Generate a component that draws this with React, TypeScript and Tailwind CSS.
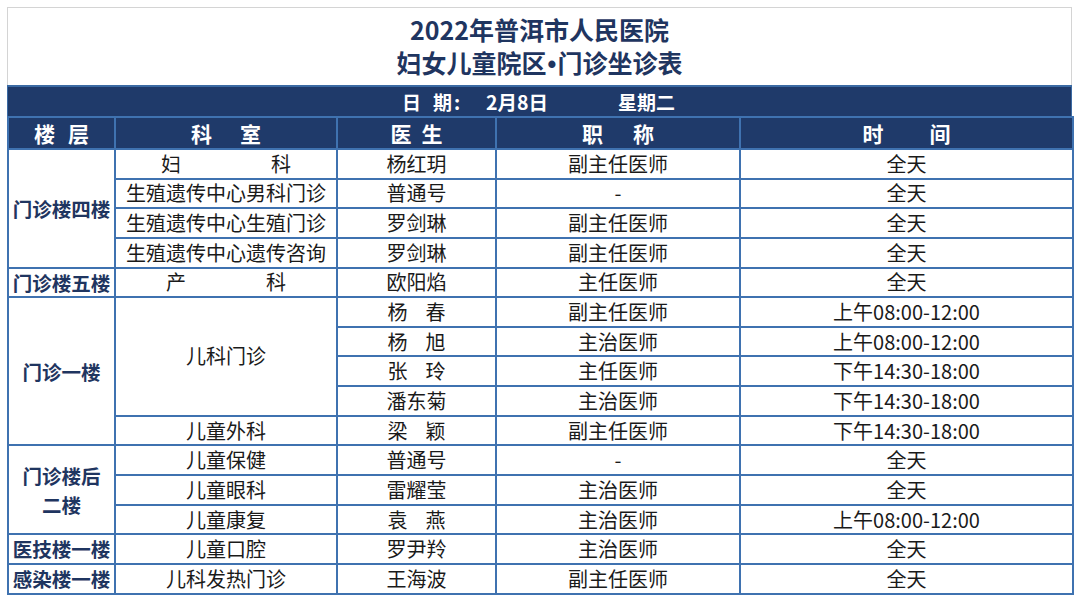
import React from "react";

const FONT = { fontFamily: '"Noto Sans CJK SC", "Noto Sans", sans-serif' };

type Row = {
  floor?: { text: React.ReactNode; span: number };
  dept?: { text: React.ReactNode; span: number };
  doctor: React.ReactNode;
  title: string;
  time: string;
};

const Spread = ({ a, b, w }: { a: string; b: string; w: string }) => (
  <span className={`inline-flex justify-between ${w}`}>
    <span>{a}</span>
    <span>{b}</span>
  </span>
);

const rows: Row[] = [
  { floor: { text: "门诊楼四楼", span: 4 }, dept: { text: <Spread a="妇" b="科" w="w-[130px]" />, span: 1 }, doctor: "杨红玥", title: "副主任医师", time: "全天" },
  { dept: { text: "生殖遗传中心男科门诊", span: 1 }, doctor: "普通号", title: "-", time: "全天" },
  { dept: { text: "生殖遗传中心生殖门诊", span: 1 }, doctor: "罗剑琳", title: "副主任医师", time: "全天" },
  { dept: { text: "生殖遗传中心遗传咨询", span: 1 }, doctor: "罗剑琳", title: "副主任医师", time: "全天" },
  { floor: { text: "门诊楼五楼", span: 1 }, dept: { text: <Spread a="产" b="科" w="w-[120px]" />, span: 1 }, doctor: "欧阳焰", title: "主任医师", time: "全天" },
  { floor: { text: "门诊一楼", span: 5 }, dept: { text: "儿科门诊", span: 4 }, doctor: <Spread a="杨" b="春" w="w-[58px]" />, title: "副主任医师", time: "上午08:00-12:00" },
  { doctor: <Spread a="杨" b="旭" w="w-[58px]" />, title: "主治医师", time: "上午08:00-12:00" },
  { doctor: <Spread a="张" b="玲" w="w-[58px]" />, title: "主任医师", time: "下午14:30-18:00" },
  { doctor: "潘东菊", title: "主治医师", time: "下午14:30-18:00" },
  { dept: { text: "儿童外科", span: 1 }, doctor: <Spread a="梁" b="颖" w="w-[58px]" />, title: "副主任医师", time: "下午14:30-18:00" },
  {
    floor: {
      text: (
        <span className="flex flex-col items-center leading-[29px]">
          <span>门诊楼后</span>
          <span>二楼</span>
        </span>
      ),
      span: 3,
    },
    dept: { text: "儿童保健", span: 1 },
    doctor: "普通号",
    title: "-",
    time: "全天",
  },
  { dept: { text: "儿童眼科", span: 1 }, doctor: "雷耀莹", title: "主治医师", time: "全天" },
  { dept: { text: "儿童康复", span: 1 }, doctor: <Spread a="袁" b="燕" w="w-[58px]" />, title: "主治医师", time: "上午08:00-12:00" },
  { floor: { text: "医技楼一楼", span: 1 }, dept: { text: "儿童口腔", span: 1 }, doctor: "罗尹羚", title: "主治医师", time: "全天" },
  { floor: { text: "感染楼一楼", span: 1 }, dept: { text: "儿科发热门诊", span: 1 }, doctor: "王海波", title: "副主任医师", time: "全天" },
];

const td = "border-2 border-[#3f72b0] text-center align-middle p-0 leading-none";

export default function App() {
  return (
    <div className="w-[1080px] h-[602px] bg-white pt-[7px] pl-[7px]" style={FONT}>
      <div className="w-[1065px]">
        {/* Title */}
        <div className="h-[78px] border border-b-0 border-[#d4d4d4] flex flex-col items-center justify-center text-[25px] font-bold text-[#1f3560] leading-[33px] pt-[1px]">
          <div>2022年普洱市人民医院</div>
          <div>
            妇女儿童院区
            <span className="mx-[1px]" style={{ fontFamily: '"Liberation Sans", sans-serif' }}>•</span>
            门诊坐诊表
          </div>
        </div>
        {/* Date bar */}
        <div className="h-[31px] bg-[#1f3a6a] border-t-2 border-x border-[#3b6aa3] flex items-center justify-center text-white font-bold text-[19px] leading-none pr-[2px]">
          <span>日</span>
          <span className="ml-[12px]">期</span>
          <span className="ml-[2px]">:</span>
          <span className="ml-[26px] text-[19.5px]">2月8日</span>
          <span className="ml-[70px]">星期二</span>
        </div>
        <table className="w-[1065px] table-fixed border-collapse">
          <colgroup>
            <col className="w-[107px]" />
            <col className="w-[222px]" />
            <col className="w-[159px]" />
            <col className="w-[244px]" />
            <col className="w-[333px]" />
          </colgroup>
          <thead>
            <tr className="h-[32px] bg-[#1f3a6a] text-white font-bold text-[21px]">
              <th className="border-2 border-[#3f72b0] p-0 leading-none">
                <span className="inline-flex gap-[13px]"><span>楼</span><span>层</span></span>
              </th>
              <th className="border-2 border-[#3f72b0] p-0 leading-none">
                <span className="inline-flex gap-[28px]"><span>科</span><span>室</span></span>
              </th>
              <th className="border-2 border-[#3f72b0] p-0 leading-none">
                <span className="inline-flex gap-[10px]"><span>医</span><span>生</span></span>
              </th>
              <th className="border-2 border-[#3f72b0] p-0 leading-none">
                <span className="inline-flex gap-[30px]"><span>职</span><span>称</span></span>
              </th>
              <th className="border-2 border-[#3f72b0] p-0 leading-none">
                <span className="inline-flex gap-[46px]"><span>时</span><span>间</span></span>
              </th>
            </tr>
          </thead>
          <tbody className="text-[20px] text-[#1a1a1a]">
            {rows.map((r, i) => (
              <tr key={i} className="h-[29.65px]">
                {r.floor && (
                  <td rowSpan={r.floor.span} className={`${td} font-bold text-[19.5px] text-[#1f3560]`}>
                    {r.floor.text}
                  </td>
                )}
                {r.dept && (
                  <td rowSpan={r.dept.span} className={td}>
                    {r.dept.text}
                  </td>
                )}
                <td className={td}>{r.doctor}</td>
                <td className={td}>{r.title}</td>
                <td className={td}>{r.time}</td>
              </tr>
            ))}
          </tbody>
        </table>
      </div>
    </div>
  );
}
